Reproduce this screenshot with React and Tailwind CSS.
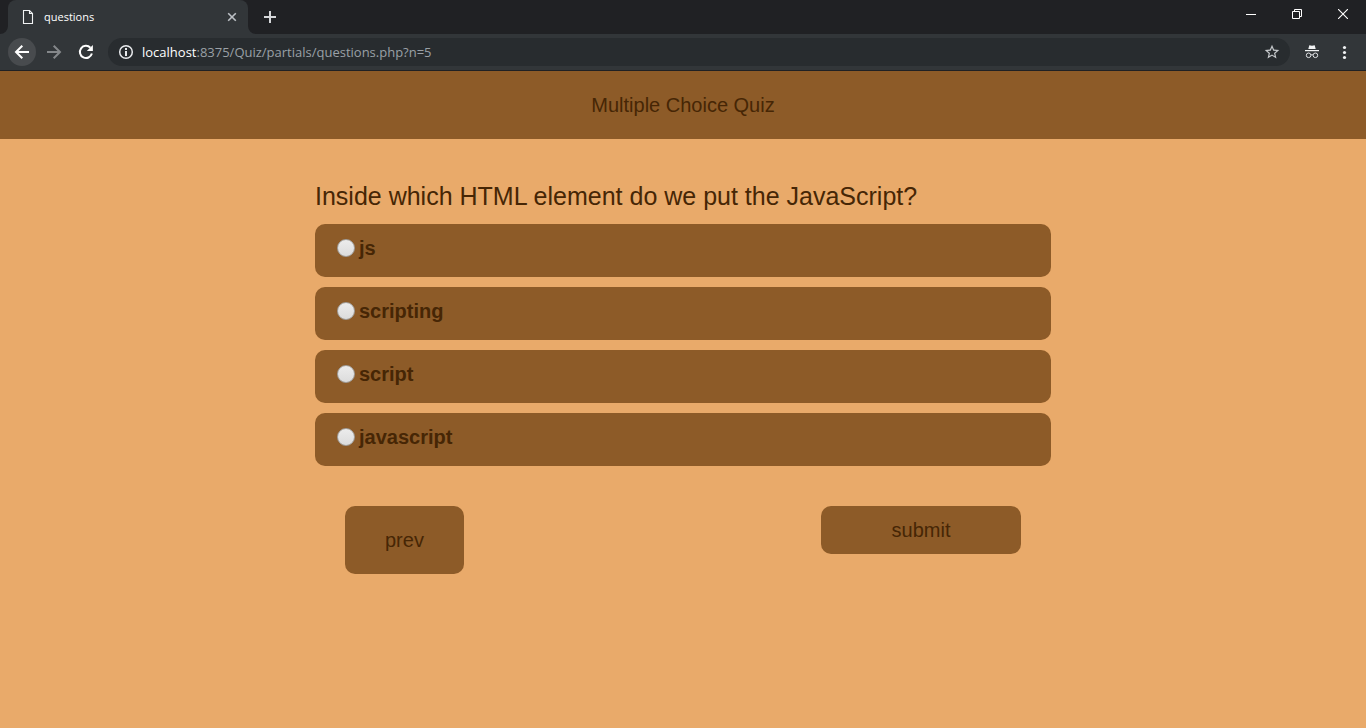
import React from "react";

const answers = ["js", "scripting", "script", "javascript"];

function TabStrip() {
  return (
    <div className="flex h-[34px] items-stretch bg-[#202124] font-['Open_Sans','Noto_Sans',sans-serif]">
      <div className="flex w-2 items-end">
        <svg width="8" height="8" viewBox="0 0 8 8" aria-hidden="true">
          <path d="M8 0V8H0A8 8 0 0 0 8 0Z" fill="#323639" />
        </svg>
      </div>
      <div className="flex w-60 items-center rounded-t-lg bg-[#323639] pl-3 pr-2">
        <svg width="16" height="16" viewBox="0 0 16 16" fill="none" stroke="#f1f3f4" strokeWidth="1.1" aria-hidden="true">
          <path d="M3.5 1.5H9.5L12.5 4.5V14.5H3.5Z" />
          <path d="M9.5 1.8V4.5H12.2" />
        </svg>
        <span className="ml-2 flex-1 text-[11px] leading-4 text-white">questions</span>
        <button type="button" aria-label="Close tab" className="flex size-4 items-center justify-center">
          <svg width="10" height="10" viewBox="0 0 10 10" stroke="#bdc1c6" strokeWidth="1.6">
            <path d="M1.2 1.2L8.8 8.8M8.8 1.2L1.2 8.8" />
          </svg>
        </button>
      </div>
      <div className="flex w-2 items-end">
        <svg width="8" height="8" viewBox="0 0 8 8" aria-hidden="true">
          <path d="M0 0V8H8A8 8 0 0 1 0 0Z" fill="#323639" />
        </svg>
      </div>
      <button type="button" aria-label="New tab" className="flex w-7 items-center justify-center">
        <svg width="12" height="12" viewBox="0 0 12 12" stroke="#d5d7da" strokeWidth="2">
          <path d="M6 0V12M0 6H12" />
        </svg>
      </button>
      <div className="ml-auto flex h-7">
        <button type="button" aria-label="Minimize" className="flex w-[46px] items-center justify-center">
          <svg width="10" height="10" viewBox="0 0 10 10" shapeRendering="crispEdges">
            <path d="M0 5H10V6H0Z" fill="#fff" />
          </svg>
        </button>
        <button type="button" aria-label="Restore" className="flex w-[46px] items-center justify-center">
          <svg width="10" height="10" viewBox="0 0 10 10" fill="none" stroke="#fff">
            <path d="M0.5 2.5H7.5V9.5H0.5ZM2.5 2.5V0.5H9.5V7.5H7.5" />
          </svg>
        </button>
        <button type="button" aria-label="Close window" className="flex w-[46px] items-center justify-center">
          <svg width="10" height="10" viewBox="0 0 10 10" stroke="#fff" strokeWidth="1.1">
            <path d="M0 0L10 10M10 0L0 10" />
          </svg>
        </button>
      </div>
    </div>
  );
}

function Toolbar() {
  return (
    <div className="flex h-[37px] items-center border-b border-[#202124] bg-[#323639] pl-2 pr-3.5 font-['Open_Sans','Noto_Sans',sans-serif]">
      <button type="button" aria-label="Back" className="flex size-7 items-center justify-center rounded-full bg-[#484b4e]">
        <svg width="16" height="16" viewBox="0 0 16 16" fill="none" stroke="#fff" strokeWidth="2">
          <path d="M15 8H2.4M8.3 1.7L2 8L8.3 14.3" />
        </svg>
      </button>
      <button type="button" aria-label="Forward" className="ml-1 flex size-7 items-center justify-center">
        <svg width="16" height="16" viewBox="0 0 16 16" fill="none" stroke="#84878a" strokeWidth="2">
          <path d="M1 8H13.6M7.7 1.7L14 8L7.7 14.3" />
        </svg>
      </button>
      <button type="button" aria-label="Reload" className="ml-1 flex size-7 items-center justify-center">
        <svg width="16" height="16" viewBox="0 0 16 16" fill="none">
          <path d="M13.9 9.6A6.1 6.1 0 1 1 12.4 3.7" stroke="#fff" strokeWidth="2" />
          <path d="M14.9 1V7.1H8.8Z" fill="#fff" />
        </svg>
      </button>
      <div className="ml-2 flex h-7 flex-1 items-center rounded-full bg-[#282c2f] pl-2.5 pr-2.5">
        <svg width="16" height="16" viewBox="0 0 16 16" fill="none" aria-hidden="true">
          <circle cx="8" cy="8" r="6.3" stroke="#e8eaed" strokeWidth="1.5" />
          <path d="M7 7H9V12H7ZM7 4H9V6H7Z" fill="#e8eaed" />
        </svg>
        <div className="ml-2 flex-1 text-[13px] leading-5 text-[#9aa0a6]">
          <span className="text-white">localhost</span>:8375/Quiz/partials/questions.php?n=5
        </div>
        <button type="button" aria-label="Bookmark this page" className="flex size-4 items-center justify-center">
          <svg width="16" height="16" viewBox="1 1 22 22" fill="#c6c9cc">
            <path d="M22 9.24l-7.19-.62L12 2 9.19 8.63 2 9.24l5.46 4.73L5.82 21 12 17.27 18.18 21l-1.63-7.03L22 9.24zM12 15.4l-3.76 2.27 1-4.28-3.32-2.88 4.38-.38L12 6.1l1.71 4.04 4.38.38-3.32 2.88 1 4.28L12 15.4z" />
          </svg>
        </button>
      </div>
      <div className="ml-3.5 flex size-4 items-center justify-center">
        <svg width="16" height="16" viewBox="0 0 16 16" fill="none" role="img" aria-label="Incognito">
          <path d="M5.3 1.2L8 1.8L10.7 1.2L11.7 5H4.3Z" fill="#f1f3f4" />
          <path d="M1 6H15V7.2H1Z" fill="#f1f3f4" />
          <circle cx="4.6" cy="11.3" r="2.3" stroke="#dfe1e4" strokeWidth="1" />
          <circle cx="11.4" cy="11.3" r="2.3" stroke="#dfe1e4" strokeWidth="1" />
          <path d="M6.9 11Q8 10.4 9.1 11" stroke="#dfe1e4" strokeWidth="1" />
        </svg>
      </div>
      <button type="button" aria-label="Menu" className="ml-4 flex size-4 items-center justify-center">
        <svg width="16" height="16" viewBox="0 0 16 16" fill="#f1f3f4">
          <circle cx="8.5" cy="3.5" r="1.6" />
          <circle cx="8.5" cy="8.5" r="1.6" />
          <circle cx="8.5" cy="13.5" r="1.6" />
        </svg>
      </button>
    </div>
  );
}

function Answer({ text }) {
  return (
    <label className="flex h-[53px] items-start rounded-[10px] bg-[#8d5b28] pl-[22px] pt-3 text-xl leading-6 font-bold">
      <input
        type="radio"
        name="answer"
        value={text}
        className="mt-[3px] mr-1 size-[18px] appearance-none rounded-full border border-[#a19f9c] bg-linear-to-b from-[#ececec] to-[#dcdcdc] checked:border-4"
      />
      {text}
    </label>
  );
}

export default function App() {
  return (
    <div className="flex min-h-screen flex-col bg-[#e9aa6a] font-['Liberation_Sans',Arial,sans-serif] text-[#462605]">
      <TabStrip />
      <Toolbar />
      <header className="bg-[#8d5b28] py-5 text-center">
        <h1 className="text-xl leading-7">Multiple Choice Quiz</h1>
      </header>
      <main className="mx-auto w-full max-w-[736px] pt-[41px]">
        <form onSubmit={(e) => e.preventDefault()}>
          <fieldset>
            <legend className="mb-3 text-[25px] leading-8">Inside which HTML element do we put the JavaScript?</legend>
            <div className="flex flex-col gap-2.5">
              {answers.map((a) => (
                <Answer key={a} text={a} />
              ))}
            </div>
          </fieldset>
          <div className="mt-10 flex items-start justify-between px-[30px]">
            <button type="button" className="rounded-[10px] bg-[#8d5b28] px-10 py-5 text-xl leading-7">
              prev
            </button>
            <button type="submit" className="h-12 w-[200px] rounded-[10px] bg-[#8d5b28] text-xl leading-7">
              submit
            </button>
          </div>
        </form>
      </main>
    </div>
  );
}
